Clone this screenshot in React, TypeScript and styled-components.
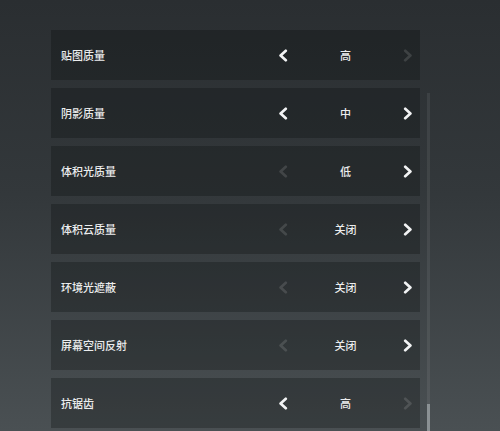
import React from 'react';
import styled, { createGlobalStyle } from 'styled-components';

const GlobalStyle = createGlobalStyle`
    html, body {
        margin: 0;
        padding: 0;
        background: #2b2f32;
    }
    body {
        font-family: "Noto Sans CJK SC", "Noto Sans", sans-serif;
    }
`;

const Screen = styled.div`
    width: 500px;
    height: 431px;
    overflow: hidden;
    background: linear-gradient(180deg, #2a2e31 0%, #33383b 45%, #4a5053 100%);
    display: flex;
    align-items: flex-start;
    padding: 30px 0 0 51px;
    box-sizing: border-box;
`;

const List = styled.div`
    width: 369px;
    display: flex;
    flex-direction: column;
    gap: 8px;
`;

const Row = styled.div`
    height: 50px;
    display: grid;
    grid-template-columns: 1fr 24px 101px 24px;
    align-items: center;
    padding-left: 10px;
    background: rgba(8, 10, 12, 0.28);
`;

const Label = styled.span`
    font-size: 11px;
    font-weight: 500;
    color: #ecedee;
`;

const Value = styled.span`
    font-size: 11px;
    font-weight: 500;
    color: #ecedee;
    text-align: center;
`;

const Arrow = styled.div<{ $on: boolean }>`
    display: flex;
    justify-content: center;
    align-items: center;
    color: ${p => (p.$on ? '#f2f3f4' : 'rgba(255,255,255,0.13)')};
`;

const Track = styled.div`
    margin: 63px 0 0 7px;
    width: 3px;
    height: 338px;
    background: rgba(255, 255, 255, 0.07);
    display: flex;
    flex-direction: column;
    justify-content: flex-end;
`;

const Thumb = styled.div`
    height: 27px;
    background: #8b9194;
`;

const Chevron: React.FC<{ dir: 'left' | 'right' }> = ({ dir }) => (
    <svg width="10" height="13" viewBox="0 0 10 13">
        <path
            d={dir === 'left' ? 'M7.8 1.8 L2.6 6.5 L7.8 11.2' : 'M2.2 1.8 L7.4 6.5 L2.2 11.2'}
            fill="none"
            stroke="currentColor"
            strokeWidth="2.7"
            strokeLinecap="round"
            strokeLinejoin="round"
        />
    </svg>
);

const settings = [
    { name: '贴图质量', value: '高', prev: true, next: false },
    { name: '阴影质量', value: '中', prev: true, next: true },
    { name: '体积光质量', value: '低', prev: false, next: true },
    { name: '体积云质量', value: '关闭', prev: false, next: true },
    { name: '环境光遮蔽', value: '关闭', prev: false, next: true },
    { name: '屏幕空间反射', value: '关闭', prev: false, next: true },
    { name: '抗锯齿', value: '高', prev: true, next: false },
];

const App: React.FC = () => {
    return (
        <>
            <GlobalStyle />
            <Screen>
                <List>
                    {settings.map(s => (
                        <Row key={s.name}>
                            <Label>{s.name}</Label>
                            <Arrow $on={s.prev}><Chevron dir="left" /></Arrow>
                            <Value>{s.value}</Value>
                            <Arrow $on={s.next}><Chevron dir="right" /></Arrow>
                        </Row>
                    ))}
                </List>
                <Track>
                    <Thumb />
                </Track>
            </Screen>
        </>
    );
};

export default App;
